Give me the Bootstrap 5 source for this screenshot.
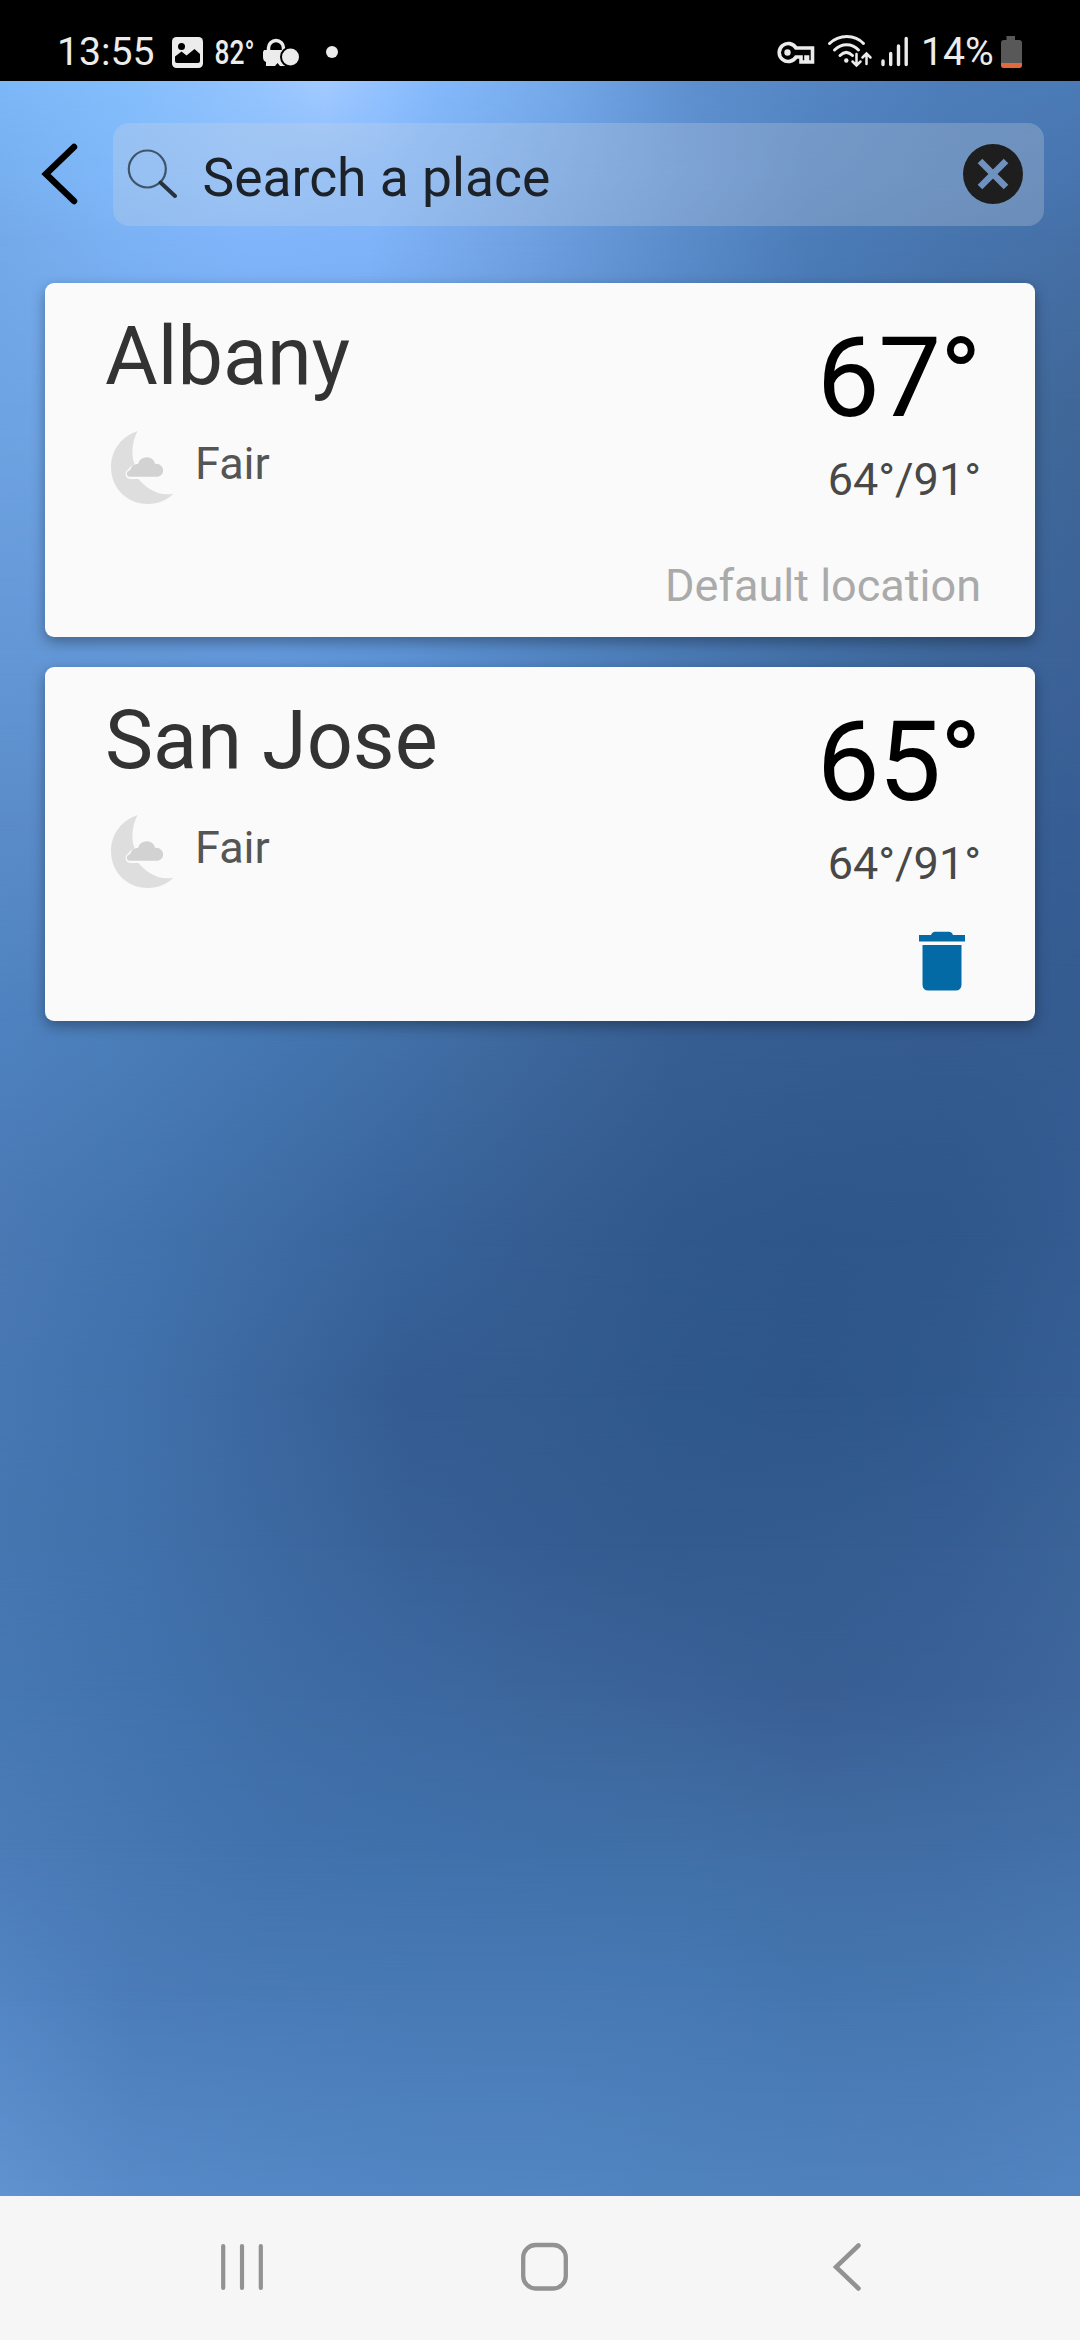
<!DOCTYPE html>
<html lang="en">
<head>
<meta charset="utf-8">
<meta name="viewport" content="width=device-width, initial-scale=1">
<title>Weather places</title>
<link href="https://cdn.jsdelivr.net/npm/bootstrap@5.3.0/dist/css/bootstrap.min.css" rel="stylesheet">
<style>
body{font-family:Roboto,"Liberation Sans",sans-serif;width:1080px;height:2340px;overflow:hidden;background:#4677b1}
svg{display:block;flex:none}
.statusbar{height:81px;background:#000;color:#ececec;padding-left:57px;padding-right:53px}
.clock,.pct{line-height:1;padding-top:32.5px;font-size:39.2px;height:81px}
.clock{width:108px}
.pct{width:82px;padding-left:6px}
.sky{z-index:0}
/* Each sky row is solid down to its own line and fades out towards the next one */
.skyrow{position:absolute;inset:0}
.searchrow{padding:42px 36px 0 0}
.backbtn{width:113px;height:103px}
.searchbox{height:103px;border-radius:16px;background:rgba(212,216,222,.27)}
.hinttext{font-size:53.4px;line-height:1;color:#1c2227;padding-left:25.5px;padding-top:6px}
.places{padding:57px 45px 0;gap:30px}
.place{height:354px;border:0;border-radius:9px;background:#fafafa;box-shadow:0 5px 14px rgba(0,0,0,.34);padding:0 55px 0 60px}
.cityname{font-size:81px;line-height:96px;color:#333;margin-top:26px}
.sumrow{margin-top:20px}
.summary{font-size:45px;line-height:52px;color:#555;padding-left:15px;margin-top:12.5px}
.tempnow{font-size:112px;line-height:132px;color:#000;margin-top:29px;letter-spacing:-1.5px}
.range{font-size:45px;line-height:52px;color:#484848;margin-top:9.5px;margin-right:-1px}
.deflabel{font-size:45px;line-height:52px;color:#aaa;margin-top:54px;margin-right:-1px}
.sysnav{height:144px;background:#f6f6f6}
</style>
<script src="https://cdn.jsdelivr.net/npm/bootstrap@5.3.0/dist/js/bootstrap.bundle.min.js"></script>
</head>
<body class="d-flex flex-column">
<svg width="0" height="0" class="position-absolute">
  <defs>
    <symbol id="fairnight" viewBox="105 425 75 85">
      <path fill="#dedede" d="M137.500 431C120 437 111 452 111 467c0 21 16 37 37 37 10 0 19-4 25.500-10.300C158 497 145 487 138.500 479H130a5 5 0 0 1-1.500-9.500c.5-3 6-4 6-5.500-1.500-4-2.500-8-2-14 .3-7 2-13 5-19z"/>
      <path fill="#d2d2d2" d="M130 476.700a3 3 0 0 1-.2-6c1.700-5 5-6.900 8.200-6.700a8.900 8.900 0 0 1 17.300 0A6.400 6.400 0 1 1 158 476.700z"/>
    </symbol>
  </defs>
</svg>

<header class="statusbar d-flex align-items-start flex-shrink-0">
  <div class="clock">13:55</div>
  <svg width="45" height="81" viewBox="165 0 45 81"><rect x="172" y="37" width="31" height="31" rx="4.500" fill="#ececec"/><circle cx="181.500" cy="46.500" r="3.500"/><path d="M175 61v-4.500l6.500-5 5 4 8-6.500 5.500 5V61q0 2-2 2h-21q-2 0-2-2z"/></svg>
  <svg width="48" height="81" viewBox="210 0 48 81"><text x="214.500" y="64" font-size="34" fill="#ececec" font-family="Roboto, sans-serif" font-weight="500" textLength="40" lengthAdjust="spacingAndGlyphs">82°</text></svg>
  <svg width="52" height="81" viewBox="258 0 52 81"><path d="M268.500 51v-3a7.500 7.500 0 0 1 15 0v3" fill="none" stroke="#ececec" stroke-width="3.500"/><path d="M264 50h22l-1 16h-5l-2.500-3-2.500 3h-9v-4q-3-1-3-5v-5z" fill="#ececec"/><circle cx="290.500" cy="57" r="9.500" fill="#ececec" stroke="#000" stroke-width="2"/></svg>
  <svg width="45" height="81" viewBox="310 0 45 81"><circle cx="332" cy="52" r="6" fill="#ececec"/></svg>
  <svg class="ms-auto" width="52" height="81" viewBox="770 0 52 81"><g fill="none" stroke="#ececec" stroke-width="3.600"><path d="M796 48a9 9 0 1 0 0 9h5v5h5v-5h1.500v5h5V48z" stroke-linejoin="miter"/></g><circle cx="787.500" cy="52.500" r="3.200" fill="#ececec"/></svg>
  <svg width="54" height="81" viewBox="822 0 54 81"><g fill="none" stroke="#ececec" stroke-width="3" stroke-linecap="round"><path d="M829.500 43.500c9.500-9.500 25.500-9.500 34 0M834.500 50c7-7 17.500-7 24 0M840 55.500c4-4 8.500-4 12.500 0"/><path d="M856.500 54v11.500m-4-4 4 4 4-4M866.500 64V53.500m-4 4 4-4 4 4" stroke-width="2.500"/></g><circle cx="846.300" cy="60.500" r="2.200" fill="#ececec"/></svg>
  <svg width="39" height="81" viewBox="876 0 39 81"><path d="M883 61v3.500M890.700 53.500v11M898.500 46v18.500M906.200 38.500v26" stroke="#ececec" stroke-width="3.400" stroke-linecap="round"/></svg>
  <div class="pct">14%</div>
  <svg width="30" height="81" viewBox="997 0 30 81"><path d="M1006.500 36h8.500v4h4q3 0 3 3v22q0 3-3 3h-15q-3 0-3-3V43q0-3 3-3h2.500z" fill="#585858"/><path d="M1001 63h21v2q0 3-3 3h-15q-3 0-3-3z" fill="#e3683e"/></svg>
</header>

<main class="flex-grow-1 position-relative">
  <div class="sky position-absolute top-0 start-0 w-100 h-100 overflow-hidden" id="sky"></div>
  <div class="position-relative">
    <div class="searchrow d-flex">
      <div class="backbtn flex-shrink-0">
        <svg width="113" height="103" viewBox="0 123 113 103"><path d="M74 147 46 174l28 27" fill="none" stroke="#000" stroke-width="6.500" stroke-linecap="round"/></svg>
      </div>
      <div class="searchbox flex-grow-1 d-flex align-items-center">
        <svg width="64" height="103" viewBox="113 123 64 103"><circle cx="147.300" cy="169" r="18.500" fill="none" stroke="#405468" stroke-width="2.200"/><path d="m160.500 182.500 14.500 13.500" stroke="#27333f" stroke-width="4" stroke-linecap="round"/></svg>
        <div class="hinttext">Search a place</div>
        <svg class="ms-auto" width="84" height="103" viewBox="960 123 84 103"><mask id="cross"><rect x="960" y="123" width="84" height="103" fill="#fff"/><path d="m980 161 26 26m0-26-26 26" stroke="#000" stroke-width="6.500" stroke-linecap="butt"/></mask><circle cx="993" cy="174" r="30" fill="#1e1e1e" mask="url(#cross)"/></svg>
      </div>
    </div>
    <div class="places d-flex flex-column">
      <section class="card place flex-row justify-content-between">
        <div>
          <div class="cityname">Albany</div>
          <div class="sumrow d-flex"><svg width="75" height="85"><use href="#fairnight"/></svg><div class="summary">Fair</div></div>
        </div>
        <div class="text-end">
          <div class="tempnow">67°</div>
          <div class="range">64°/91°</div>
          <div class="deflabel">Default location</div>
        </div>
      </section>
      <section class="card place flex-row justify-content-between">
        <div>
          <div class="cityname">San Jose</div>
          <div class="sumrow d-flex"><svg width="75" height="85"><use href="#fairnight"/></svg><div class="summary">Fair</div></div>
        </div>
        <div class="text-end">
          <div class="tempnow">65°</div>
          <div class="range">64°/91°</div>
          <svg class="ms-auto mt-4" width="66" height="80" viewBox="914 914 66 80"><path fill="#046aa5" d="M919 935h12q1.500-3.300 4-3.300h14q2.500 0 4 3.300h12v6.500h-46zM922.500 945h39v39.500q0 6-6 6h-27q-6 0-6-6z"/></svg>
        </div>
      </section>
    </div>
  </div>
</main>

<footer class="sysnav flex-shrink-0">
  <div class="d-flex h-100">
    <svg width="360" height="144" viewBox="0 2196 360 144"><path d="M223.200 2246v42M242 2246v42M260.800 2246v42" stroke="#929292" stroke-width="4.200" stroke-linecap="round"/></svg>
    <svg width="360" height="144" viewBox="360 2196 360 144"><rect x="523.200" y="2245" width="42.600" height="43.500" rx="12.500" fill="none" stroke="#929292" stroke-width="4.300"/></svg>
    <svg width="360" height="144" viewBox="720 2196 360 144"><path d="m858.500 2245.500-22.500 21.500 22.500 21.500" fill="none" stroke="#929292" stroke-width="4.500" stroke-linecap="round" stroke-linejoin="miter"/></svg>
  </div>
</footer>
<script>
// Sky colours on a coarse grid: [distance from top, colours from left to right, "_" introduces an explicit stop]
const rows=[
 [0,'#7cb7f7 #84bdfb #95c4fe_24% #a3caff_30% #94c2ff_35% #84b9fb_40% #74a8e8_52% #5e8fce_64% #5485c2 #4d7db9 #4b7bb6'],
 [90,'#78b0f0 #80b9fb #8abefc #84b9fc_35% #75a9ea_48% #6093d4_62.5% #5082c0 #4b7bb7 #4875af'],
 [165,'#73a9e8 #7ab1f4 #80b4fa #7fb3f9_34% #70a1e2_48% #5a8ccb_62.5% #4b7cb8 #4774ad #456fa6'],
 [340,'#6ea3e2 #6fa5e6 #71a6e8 #6a9fdf #6092d1 #5182c0 #4775af #426ca1 #406797'],
 [570,'#6497d6 #6397d8 #6398da #5d92d4 #5386c4 #4b7ab4 #4370a7 #3e679b #3c6298'],
 [760,'#5a8bc8 #588ac7 #5485c4 #4c7ebb #4676b1 #3f6ca4 #3b6499 #386094 #375e94'],
 [939,'#4e82c0 #4b7eb9 #4577b2 #4270a8 #3d679c #385f94 #365d92 #355b90 #355c91'],
 [1165,'#4a78b3 #4273ae #3e6ba3 #37629a #355d92 #30588c #2e568a #2f578b #345c92'],
 [1316,'#4777b2 #4171ab #3b669e #345c92 #335b8f #2f588b #2e568a #30598e #365f95'],
 [1467,'#4676b0 #4171ab #3d69a1 #386198 #365d93 #335b8f #345c90 #365e94 #3b6499'],
 [1618,'#4678b3 #4273ae #3f6da6 #3d69a2 #3c669c #3b6399 #395f95 #3a6298 #3f679d'],
 [1769,'#4b7cb8 #4677b2 #4272ad #4071ab #4070a9 #4070a7 #416da4 #416da5 #4370a8'],
 [1920,'#5385c4 #4b7cb9 #497bb7 #487ab5 #487ab5 #4779b4 #4576af #4777b0 #4b7bb5'],
 [2115,'#6193d1 #588ac9 #5488c6 #5286c4 #5286c3 #5084bf #5083be #5082be #5385c2']
];
const sky=document.getElementById('sky');
for(let i=rows.length-1;i>=0;i--){
  const el=document.createElement('div');el.className='skyrow';
  el.style.background='linear-gradient(90deg,'+rows[i][1].split(' ').join(',').replace(/_/g,' ')+')';
  if(i<rows.length-1){const m='linear-gradient(180deg,#000 '+rows[i][0]+'px,transparent '+rows[i+1][0]+'px)';el.style.webkitMaskImage=m;el.style.maskImage=m}
  sky.appendChild(el);
}
</script>
</body>
</html>
